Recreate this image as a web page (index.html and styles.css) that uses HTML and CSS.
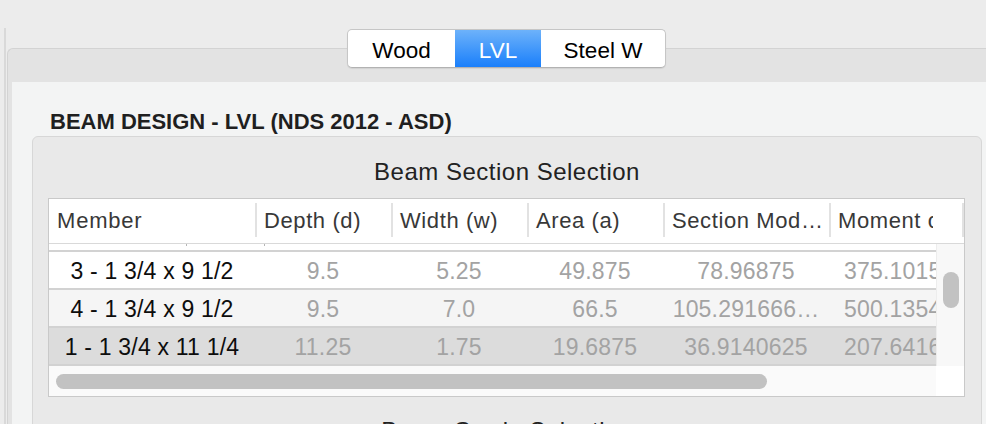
FILE: index.html
```html
<!DOCTYPE html>
<html lang="en">
<head>
<meta charset="utf-8">
<title>Beam Design - LVL</title>
<link rel="stylesheet" href="styles.css">
</head>
<body>
<div class="page">
  <div class="rail"></div>
  <div class="main">
    <div class="segmented">
      <div class="seg seg-wood">Wood</div>
      <div class="seg seg-lvl">LVL</div>
      <div class="seg seg-steel">Steel W</div>
    </div>
    <div class="tabbox">
      <div class="panel">
        <h1 class="heading">BEAM DESIGN - LVL (NDS 2012 - ASD)</h1>
        <section class="group">
          <h2 class="group-title">Beam Section Selection</h2>
          <div class="table">
            <div class="thead">
              <div class="th c-member"><span class="th-label">Member</span></div>
              <div class="th c-depth"><span class="sep"></span><span class="th-label">Depth (d)</span></div>
              <div class="th c-width"><span class="sep"></span><span class="th-label">Width (w)</span></div>
              <div class="th c-area"><span class="sep"></span><span class="th-label">Area (a)</span></div>
              <div class="th c-secmod"><span class="sep"></span><span class="th-label">Section Mod…</span></div>
              <div class="th c-moment"><span class="sep"></span><span class="th-label th-clip">Moment of Inertia (I)</span><span class="th-fill"></span><span class="sep"></span></div>
            </div>
            <div class="tbody">
              <div class="rows">
                <div class="list">
                  <div class="row row-partial">
                    <span class="slash-tip tip-a"></span>
                    <span class="slash-tip tip-b"></span>
                  </div>
                  <div class="row">
                    <div class="td c-member td-member">3 - 1 3/4 x 9 1/2</div>
                    <div class="td c-depth">9.5</div>
                    <div class="td c-width">5.25</div>
                    <div class="td c-area">49.875</div>
                    <div class="td c-secmod">78.96875</div>
                    <div class="td c-moment td-moment">375.1015625</div>
                  </div>
                  <div class="row row-alt">
                    <div class="td c-member td-member">4 - 1 3/4 x 9 1/2</div>
                    <div class="td c-depth">9.5</div>
                    <div class="td c-width">7.0</div>
                    <div class="td c-area">66.5</div>
                    <div class="td c-secmod">105.291666…</div>
                    <div class="td c-moment td-moment">500.1354166</div>
                  </div>
                  <div class="row row-sel">
                    <div class="td c-member td-member">1 - 1 3/4 x 11 1/4</div>
                    <div class="td c-depth">11.25</div>
                    <div class="td c-width">1.75</div>
                    <div class="td c-area">19.6875</div>
                    <div class="td c-secmod">36.9140625</div>
                    <div class="td c-moment td-moment">207.6416015</div>
                  </div>
                </div>
              </div>
              <div class="vscroll"><div class="vthumb"></div></div>
            </div>
            <div class="hscroll">
              <div class="htrack"><div class="hthumb"></div></div>
              <div class="corner"></div>
            </div>
          </div>
          <h2 class="group-title group-title-next">Beam Grade Selection</h2>
        </section>
      </div>
    </div>
  </div>
</div>
</body>
</html>
```
FILE: styles.css
```css
html, body {
  margin: 0;
  padding: 0;
}

body {
  background: #ececec;
  font-family: "Liberation Sans", Arial, sans-serif;
  overflow: hidden;
}

.page {
  display: flex;
  width: 986px;
  height: 424px;
  overflow: hidden;
  padding-left: 4px;
  box-sizing: border-box;
}

.rail {
  flex: 0 0 2px;
  margin-top: 28px;
  background: #d9d9d9;
}

.main {
  flex: 1;
  min-width: 0;
  margin-left: 1px;
}

/* Segmented control */
.segmented {
  position: relative;
  z-index: 1;
  display: flex;
  width: max-content;
  margin: 29px 0 0 340px;
  border: 1px solid #c6c6c6;
  border-bottom-color: #b2b2b2;
  border-radius: 5px;
  background: #fff;
  overflow: hidden;
  box-shadow: 0 1px 1px rgba(0, 0, 0, 0.08);
}

.seg {
  height: 32px;
  padding-top: 5px;
  line-height: 32px;
  font-size: 22.5px;
  text-align: center;
  color: #000;
}

.seg-wood { width: 107px; }
.seg-lvl {
  width: 86px;
  color: #fff;
  background: linear-gradient(#6db2fa, #1a7ffb);
}
.seg-steel { width: 124px; }

/* Tab box */
.tabbox {
  margin-top: -20px;
  width: 1000px;
  height: 400px;
  border-top: 1px solid #d3d3d3;
  border-left: 1px solid #d3d3d3;
  border-top-left-radius: 6px;
  background: #e3e3e3;
  padding: 33px 0 0 4px;
}

.panel {
  background: #f3f4f4;
  padding-top: 27px;
  height: 500px;
}

.heading {
  margin: 0 0 1px 38px;
  font-size: 22px;
  line-height: 26px;
  font-weight: bold;
  color: #1f1f1f;
}

/* Group box */
.group {
  margin-left: 20px;
  width: 950px;
  height: 400px;
  box-sizing: border-box;
  border: 1px solid #d7d7d7;
  border-radius: 6px;
  background: #e9e9e9;
  padding: 20px 15px 0;
}

.group-title {
  margin: 0;
  font-size: 24px;
  line-height: 30px;
  letter-spacing: 0.5px;
  font-weight: normal;
  color: #222;
  text-align: center;
}

.group-title-next {
  margin-top: 19px;
}

/* Table */
.table {
  margin-top: 11px;
  width: 917px;
  box-sizing: border-box;
  border: 1px solid #c9c9c9;
  background: #fff;
}

.c-member { flex: 0 0 206px; width: 206px; }
.c-depth { flex: 0 0 136px; width: 136px; }
.c-width { flex: 0 0 136px; width: 136px; }
.c-area { flex: 0 0 136px; width: 136px; }
.c-secmod { flex: 0 0 166px; width: 166px; }
.c-moment { flex: 0 0 135px; width: 135px; }

.thead {
  display: flex;
  height: 44px;
  border-bottom: 1px solid #d9d9d9;
}

.th {
  display: flex;
  align-items: flex-start;
  box-sizing: border-box;
  padding: 4px 0 6px;
}

.sep {
  flex: 0 0 2px;
  align-self: stretch;
  background: #e2e2e2;
}

.th-label {
  padding-left: 7px;
  line-height: 36px;
  font-size: 22px;
  letter-spacing: 0.6px;
  color: #383838;
  white-space: nowrap;
}

.c-member .th-label {
  padding-left: 8px;
  letter-spacing: 0.8px;
}

.th-clip {
  flex: 0 0 95px;
  overflow: hidden;
}

.th-fill {
  flex: 1;
}

.tbody {
  display: flex;
  height: 122px;
}

.rows {
  flex: 1;
  min-width: 0;
  overflow: hidden;
}

.list {
  margin-top: -30px;
  width: 915px;
}

.row {
  display: flex;
  height: 34px;
  padding-top: 2px;
  line-height: 34px;
  border-bottom: 2px solid #d2d2d2;
  font-size: 23px;
  letter-spacing: 0.2px;
  color: #a3a3a3;
  background: #fff;
}

.row-partial {
  align-items: flex-end;
}

.slash-tip {
  width: 1px;
  height: 2px;
  margin-bottom: 4px;
  background: #b5b5b5;
}

.tip-a { margin-left: 137px; }
.tip-b { margin-left: 77px; }

.row-alt { background: #f5f5f5; }
.row-sel { background: #dcdcdc; }

.td {
  text-align: center;
  white-space: nowrap;
  overflow: hidden;
}

.td-member { color: #0d0d0d; }

.td-moment {
  text-align: left;
  padding-left: 15px;
  box-sizing: border-box;
}

.vscroll {
  flex: 0 0 28px;
  box-sizing: border-box;
  background: #f8f8f8;
  border-left: 1px solid #ededed;
  padding: 28px 0 0 6px;
}

.vthumb {
  width: 16px;
  height: 36px;
  border-radius: 8px;
  background: #c2c2c2;
}

.hscroll {
  display: flex;
  height: 30px;
}

.htrack {
  flex: 1;
  background: #fafafa;
  padding: 8px 0 0 7px;
}

.hthumb {
  width: 711px;
  height: 15px;
  border-radius: 8px;
  background: #c2c2c2;
}

.corner {
  flex: 0 0 28px;
  background: #fff;
}
```
